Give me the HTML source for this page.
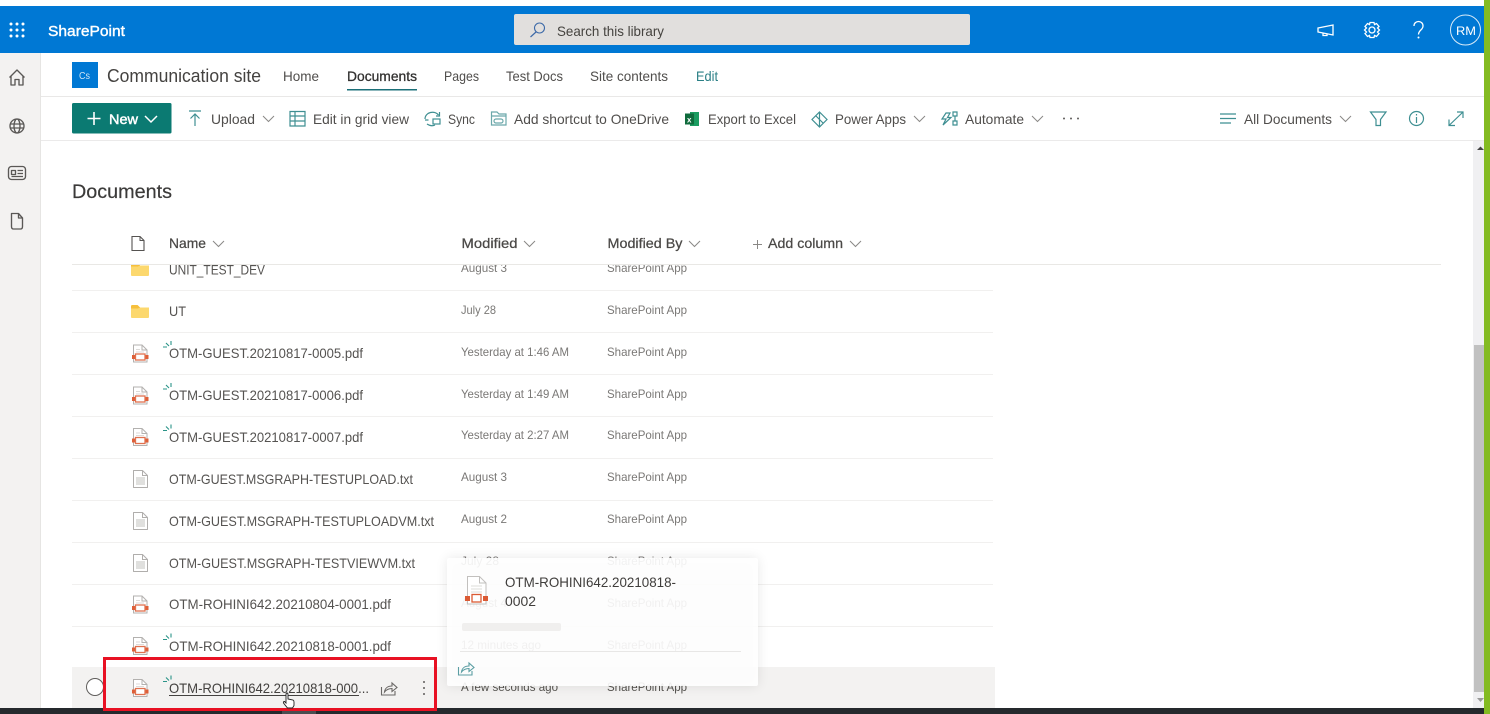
<!DOCTYPE html>
<html lang="en"><head><meta charset="utf-8"><title>Documents</title>
<style>
html,body{margin:0;padding:0;width:1490px;height:714px;overflow:hidden;background:#fff}
svg{display:block;filter:blur(.3px)}
text{font-family:"Liberation Sans",sans-serif;font-size:14px;fill:#4a4846}
.n{font-size:14px;fill:#555351}
.m{font-size:12px;fill:#7a7876}
.h{font-size:14px;fill:#4a4846;stroke:#4a4846;stroke-width:.25}
.c{font-size:14px;fill:#504e4c}
.ic{fill:none;stroke:#3f8f92;stroke-width:1.2}
.gr{fill:none;stroke:#5a5856;stroke-width:1.35;stroke-linejoin:round}
.w{fill:none;stroke:#fff;stroke-width:1.3}
.ch{fill:none;stroke:#8a8886;stroke-width:1}
</style></head><body>
<svg width="1490" height="714" viewBox="0 0 1490 714" xmlns="http://www.w3.org/2000/svg">
<defs>
<g id="pdf"><path d="M1.5 .5H10L15 5.500V17.500H1.500Z" fill="#fff" stroke="#b3b1af"/><path d="M10 .5V5.500H15" fill="none" stroke="#b3b1af"/><path d="M4 5H8M4 7.500H12" stroke="#dcdad8"/><rect x="0" y="10.500" width="3" height="4" fill="#de5f38"/><rect x="13.500" y="10.500" width="3" height="4" fill="#de5f38"/><rect x="3.500" y="9.500" width="9.500" height="6" fill="#fff" stroke="#e0714f" stroke-width="1.300"/></g>
<g id="txt"><path d="M.5 .5H9.500L14.500 5.500V17.500H.5Z" fill="#fff" stroke="#b0aeac" stroke-linejoin="round"/><path d="M9.500 .5V5.500H14.500" fill="none" stroke="#b0aeac"/><path d="M3 8H12M3 10H12M3 12H12M3 14H12" stroke="#c2c0be"/></g>
<g id="folder"><path d="M0 1.500Q0 0 1.500 0H6.500L9 2.500H18V12Q18 13 17 13H1Q0 13 0 12Z" fill="#fcd86e"/><path d="M0 3.500H6.500L9 2.500H0Z" fill="#f4ba36"/><path d="M0 1.500Q0 0 1.500 0H6.500L9 2.500L6.500 3.500H0Z" fill="#f6bf3c"/></g>
<g id="sy"><path d="M0 6H4M3 2L6 5M8 0V4" fill="none" stroke="#2a9488" stroke-width="1.100"/></g>
<g id="share"><path d="M.5 7V15H14V11" fill="none" stroke="currentColor" stroke-width="1.100"/><path d="M3.500 12C4 8 7 6 11 6V3L16 7.500L11 11.500V8.500C8 8.500 5.500 9.500 3.500 12Z" fill="none" stroke="currentColor" stroke-width="1.100"/></g>
</defs>

<rect width="1490" height="714" fill="#fff"/>
<!-- left rail -->
<rect x="0" y="53" width="41" height="661" fill="#f3f2f1"/>
<rect x="40" y="53" width="1" height="661" fill="#e6e5e3"/>
<path d="M9.500 77.500L17 70L24.500 77.500M11 76V85H15V79.500H19V85H23V76" class="gr"/>
<circle cx="17" cy="126" r="7" class="gr"/><ellipse cx="17" cy="126" rx="3" ry="7" class="gr"/><path d="M10.500 124H23.500M10.500 128H23.500" class="gr"/>
<rect x="8.500" y="166.500" width="17" height="13" rx="3" class="gr"/><rect x="11.500" y="170.500" width="4" height="4" class="gr"/><path d="M17.500 170.500H23M17.500 173.500H23M11.500 176.500H23" class="gr"/>
<path d="M11.500 213.500H18.500L22.500 218V226.500Q22.500 229 20.500 229H13.500Q11.500 229 11.500 226.500Z" class="gr"/><path d="M18.500 213.500V218H22.500" class="gr"/>

<!-- top bars -->
<rect y="0" width="1490" height="6" fill="#fff"/>
<rect y="6" width="1484" height="47" fill="#0078d4"/>
<g fill="#fff"><circle cx="11" cy="24" r="1.500"/><circle cx="17" cy="24" r="1.500"/><circle cx="23" cy="24" r="1.500"/><circle cx="11" cy="30" r="1.500"/><circle cx="17" cy="30" r="1.500"/><circle cx="23" cy="30" r="1.500"/><circle cx="11" cy="36" r="1.500"/><circle cx="17" cy="36" r="1.500"/><circle cx="23" cy="36" r="1.500"/></g>
<text x="48" y="36" textLength="77" lengthAdjust="spacingAndGlyphs" style="font-size:15px;fill:#fff;stroke:#fff;stroke-width:.4">SharePoint</text>
<rect x="514" y="14" width="456" height="31" rx="2" fill="#e1dfdd"/>
<circle cx="539.500" cy="28" r="5" fill="none" stroke="#3d6aa8" stroke-width="1.100"/><path d="M536 32L530.500 37" stroke="#3d6aa8" stroke-width="1.200"/>
<text x="557" y="36" textLength="107" lengthAdjust="spacingAndGlyphs" style="fill:#45433f">Search this library</text>
<path d="M1318 28L1333 25V35L1318 32ZM1323 33V35.500H1327V34" class="w"/>
<g transform="translate(1372,30)"><circle r="3" class="w"/><path d="M-2 -7.500H2L2.500 -5.500L4.500 -6.500L7 -3.500L5.500 -2L7.500 0L5.500 2L7 3.500L4.500 6.500L2.500 5.500L2 7.500H-2L-2.500 5.500L-4.500 6.500L-7 3.500L-5.500 2L-7.500 0L-5.500 -2L-7 -3.500L-4.500 -6.500L-2.500 -5.500Z" class="w"/></g>
<path d="M1414 26C1414 20 1423 20 1423 26C1423 30 1418.500 30 1418.500 34.500" class="w"/><circle cx="1418.500" cy="37.500" r="1" fill="#fff"/>
<circle cx="1465.500" cy="30" r="15" fill="none" stroke="#d9ebf8" stroke-width="1"/>
<text x="1456" y="35" textLength="20" lengthAdjust="spacingAndGlyphs" style="font-size:12px;fill:#fff">RM</text>
<rect x="1484" y="0" width="6" height="714" fill="#84bb22"/>

<!-- site header -->
<rect x="72" y="62" width="26" height="26" fill="#0078d4"/>
<text x="79" y="79" textLength="11" lengthAdjust="spacingAndGlyphs" style="font-size:10px;fill:#cfe4f5">Cs</text>
<text x="107" y="82" textLength="154" lengthAdjust="spacingAndGlyphs" style="font-size:18px;fill:#444240">Communication site</text>
<text x="283" y="81" textLength="36" lengthAdjust="spacingAndGlyphs" class="c">Home</text>
<text x="347" y="81" textLength="70" lengthAdjust="spacingAndGlyphs" class="c" style="fill:#323130;stroke:#323130;stroke-width:.3">Documents</text>
<rect x="347" y="89" width="70" height="1.500" fill="#1b6f78"/>
<text x="444" y="81" textLength="35" lengthAdjust="spacingAndGlyphs" class="c">Pages</text>
<text x="506" y="81" textLength="57" lengthAdjust="spacingAndGlyphs" class="c">Test Docs</text>
<text x="590" y="81" textLength="78" lengthAdjust="spacingAndGlyphs" class="c">Site contents</text>
<text x="696" y="81" textLength="22" lengthAdjust="spacingAndGlyphs" style="fill:#2a7f85">Edit</text>
<rect x="41" y="96" width="1443" height="1" fill="#e9e8e7"/>

<!-- command bar -->
<rect x="72" y="103" width="99.500" height="30.500" rx="1.500" fill="#0b7a72"/>
<path d="M94 112V125M87.500 118.500H100.500" stroke="#fff" stroke-width="1.600" fill="none"/>
<text x="109" y="124" textLength="29" lengthAdjust="spacingAndGlyphs" style="fill:#fff;stroke:#fff;stroke-width:.45">New</text>
<path d="M145 116L151 122L157 116" fill="none" stroke="#fff" stroke-width="1.500"/>
<path d="M189 111H201M195 126V114M190.500 118.500L195 114L199.500 118.500" class="ic"/>
<text x="211" y="124" textLength="44" lengthAdjust="spacingAndGlyphs" class="c">Upload</text>
<path d="M263 116L268.500 121.500L274 116" class="ch"/>
<path d="M290 111.500H305V126H290ZM290 116H305M290 121H305M295 111.500V126" class="ic"/>
<text x="313" y="124" textLength="96" lengthAdjust="spacingAndGlyphs" class="c">Edit in grid view</text>
<path d="M425 119C425 112 435 110 438.500 115M439.500 112V116H436M425 120H428.500M427 124C430 126 433 126 435 125" class="ic"/><rect x="433" y="119" width="7" height="5" class="ic"/>
<text x="448" y="124" textLength="27" lengthAdjust="spacingAndGlyphs" class="c">Sync</text>
<path d="M491.500 112H497L499 114H506V125H491.500ZM491.500 116H506" class="ic" style="stroke:#6ba8aa"/><rect x="494" y="119" width="9" height="4" rx="2" class="ic" style="stroke:#6ba8aa"/>
<text x="514" y="124" textLength="155" lengthAdjust="spacingAndGlyphs" class="c">Add shortcut to OneDrive</text>
<rect x="690" y="112" width="9" height="14" fill="#1a9c60"/><rect x="685" y="113.500" width="9" height="11" fill="#0f6b3c"/><text x="687" y="122.500" style="font-size:8px;font-weight:bold;fill:#fff">x</text>
<text x="708" y="124" textLength="88" lengthAdjust="spacingAndGlyphs" class="c">Export to Excel</text>
<path d="M819.500 112L827 119.500L819.500 127L812 119.500ZM819.500 112V127M816 116L823 123" class="ic"/>
<text x="835" y="124" textLength="71" lengthAdjust="spacingAndGlyphs" class="c">Power Apps</text>
<path d="M914 116L919.500 121.500L925 116" class="ch"/>
<path d="M946 113L942 119H946L943 125L951 117.500H947.500L950 113ZM953 112H957V116H953ZM953 121H957V125H953ZM955 116V121" class="ic"/>
<text x="965" y="124" textLength="59" lengthAdjust="spacingAndGlyphs" class="c">Automate</text>
<path d="M1032 116L1037.500 121.500L1043 116" class="ch"/>
<g fill="#5f5d5b"><circle cx="1064" cy="118.500" r="1"/><circle cx="1071" cy="118.500" r="1"/><circle cx="1078" cy="118.500" r="1"/></g>
<path d="M1220 114H1236M1220 118.500H1236M1220 123H1231" class="ic"/>
<text x="1244" y="124" textLength="88" lengthAdjust="spacingAndGlyphs" class="c">All Documents</text>
<path d="M1340 116L1345.500 121.500L1351 116" class="ch"/>
<path d="M1370.500 112H1386L1380.500 119.500V125.500H1376V119.500Z" class="ic"/>
<circle cx="1416.500" cy="118.500" r="7" class="ic"/><path d="M1416.500 117V123M1416.500 114V115.500" class="ic"/>
<path d="M1449 125.500L1463 112M1457 112H1463V118M1449 119.500V125.500H1455" class="ic"/>
<rect x="41" y="140" width="1443" height="1" fill="#ebeaea"/>

<!-- scrollbar -->
<rect x="1473" y="141" width="11" height="567" fill="#f0f0f2"/>
<path d="M1477 150L1480.500 146.500L1484 150Z" fill="#444"/>
<rect x="1474" y="345" width="10" height="347" fill="#c1c1c1"/>
<path d="M1477 698H1484L1480.500 702Z" fill="#9a9a9a"/>

<!-- rows -->
<g fill="#f1f0ef"><rect x="72" y="290" width="921" height="1"/><rect x="72" y="332" width="921" height="1"/><rect x="72" y="374" width="921" height="1"/><rect x="72" y="416" width="921" height="1"/><rect x="72" y="458" width="921" height="1"/><rect x="72" y="500" width="921" height="1"/><rect x="72" y="542" width="921" height="1"/><rect x="72" y="584" width="921" height="1"/><rect x="72" y="626" width="921" height="1"/></g>
<rect x="72" y="667" width="923" height="41" fill="#f3f2f1"/>

<text x="169" y="274.500" textLength="96" lengthAdjust="spacingAndGlyphs" class="n">UNIT_TEST_DEV</text>
<text x="461" y="272" textLength="46" lengthAdjust="spacingAndGlyphs" class="m">August 3</text>
<text x="607" y="272" textLength="80" lengthAdjust="spacingAndGlyphs" class="m">SharePoint App</text>
<use href="#folder" x="131" y="263"/>

<use href="#folder" x="131" y="305"/>
<text x="169" y="316" textLength="17" lengthAdjust="spacingAndGlyphs" class="n">UT</text>
<text x="461" y="314" textLength="35" lengthAdjust="spacingAndGlyphs" class="m">July 28</text>
<text x="607" y="314" textLength="80" lengthAdjust="spacingAndGlyphs" class="m">SharePoint App</text>

<use href="#pdf" x="132" y="344.500"/><use href="#sy" x="163" y="341"/>
<text x="169" y="358" textLength="194" lengthAdjust="spacingAndGlyphs" class="n">OTM-GUEST.20210817-0005.pdf</text>
<text x="461" y="356" textLength="108" lengthAdjust="spacingAndGlyphs" class="m">Yesterday at 1:46 AM</text>
<text x="607" y="356" textLength="80" lengthAdjust="spacingAndGlyphs" class="m">SharePoint App</text>

<use href="#pdf" x="132" y="386.500"/><use href="#sy" x="163" y="383"/>
<text x="169" y="400" textLength="194" lengthAdjust="spacingAndGlyphs" class="n">OTM-GUEST.20210817-0006.pdf</text>
<text x="461" y="398" textLength="108" lengthAdjust="spacingAndGlyphs" class="m">Yesterday at 1:49 AM</text>
<text x="607" y="398" textLength="80" lengthAdjust="spacingAndGlyphs" class="m">SharePoint App</text>

<use href="#pdf" x="132" y="428"/><use href="#sy" x="163" y="424.500"/>
<text x="169" y="442" textLength="194" lengthAdjust="spacingAndGlyphs" class="n">OTM-GUEST.20210817-0007.pdf</text>
<text x="461" y="439" textLength="108" lengthAdjust="spacingAndGlyphs" class="m">Yesterday at 2:27 AM</text>
<text x="607" y="439" textLength="80" lengthAdjust="spacingAndGlyphs" class="m">SharePoint App</text>

<use href="#txt" x="133" y="470"/>
<text x="169" y="484" textLength="244" lengthAdjust="spacingAndGlyphs" class="n">OTM-GUEST.MSGRAPH-TESTUPLOAD.txt</text>
<text x="461" y="481" textLength="46" lengthAdjust="spacingAndGlyphs" class="m">August 3</text>
<text x="607" y="481" textLength="80" lengthAdjust="spacingAndGlyphs" class="m">SharePoint App</text>

<use href="#txt" x="133" y="512"/>
<text x="169" y="526" textLength="265" lengthAdjust="spacingAndGlyphs" class="n">OTM-GUEST.MSGRAPH-TESTUPLOADVM.txt</text>
<text x="461" y="523" textLength="46" lengthAdjust="spacingAndGlyphs" class="m">August 2</text>
<text x="607" y="523" textLength="80" lengthAdjust="spacingAndGlyphs" class="m">SharePoint App</text>

<use href="#txt" x="133" y="554"/>
<text x="169" y="568" textLength="246" lengthAdjust="spacingAndGlyphs" class="n">OTM-GUEST.MSGRAPH-TESTVIEWVM.txt</text>
<text x="461" y="565" textLength="38" lengthAdjust="spacingAndGlyphs" class="m">July 28</text>
<text x="607" y="565" textLength="80" lengthAdjust="spacingAndGlyphs" class="m">SharePoint App</text>

<use href="#pdf" x="132" y="595.500"/>
<text x="169" y="609" textLength="222" lengthAdjust="spacingAndGlyphs" class="n">OTM-ROHINI642.20210804-0001.pdf</text>
<text x="461" y="607" textLength="46" lengthAdjust="spacingAndGlyphs" class="m">August 4</text>
<text x="607" y="607" textLength="80" lengthAdjust="spacingAndGlyphs" class="m">SharePoint App</text>

<use href="#pdf" x="132" y="637"/><use href="#sy" x="163" y="633.500"/>
<text x="169" y="651" textLength="222" lengthAdjust="spacingAndGlyphs" class="n">OTM-ROHINI642.20210818-0001.pdf</text>
<text x="461" y="649" textLength="80" lengthAdjust="spacingAndGlyphs" class="m">12 minutes ago</text>
<text x="607" y="649" textLength="80" lengthAdjust="spacingAndGlyphs" class="m">SharePoint App</text>

<circle cx="95" cy="687" r="8.500" fill="#fff" stroke="#605e5c" stroke-width="1"/>
<use href="#pdf" x="132" y="679"/><use href="#sy" x="163" y="675.500"/>
<text x="169" y="693" textLength="200" lengthAdjust="spacingAndGlyphs" class="n" style="fill:#43413f">OTM-ROHINI642.20210818-000...</text>
<rect x="169" y="695" width="190" height="1" fill="#43413f"/>
<use href="#share" x="381" y="680" style="color:#6a6866"/>
<g fill="#5f5d5b"><circle cx="424" cy="682" r="1"/><circle cx="424" cy="688" r="1"/><circle cx="424" cy="694" r="1"/></g>
<text x="461" y="691" textLength="97" lengthAdjust="spacingAndGlyphs" class="m" style="fill:#55534f">A few seconds ago</text>
<text x="607" y="691" textLength="80" lengthAdjust="spacingAndGlyphs" class="m" style="fill:#55534f">SharePoint App</text>

<!-- header row (covers scrolled rows) -->
<rect x="41" y="141" width="1432" height="123" fill="#fff"/>
<text x="72" y="198" textLength="100" lengthAdjust="spacingAndGlyphs" style="font-size:19px;fill:#3b3a39;stroke:#3b3a39;stroke-width:.2">Documents</text>
<path d="M132 236.500H140L144 240.500V250.500H132Z" fill="none" stroke="#555351" stroke-width="1.100"/><path d="M140 236.500V240.500H144" fill="none" stroke="#555351" stroke-width="1"/>
<text x="169" y="248" textLength="37" lengthAdjust="spacingAndGlyphs" class="h">Name</text>
<path d="M213 241L218.500 246.500L224 241" class="ch"/>
<text x="461.500" y="248" textLength="56" lengthAdjust="spacingAndGlyphs" class="h">Modified</text>
<path d="M524 241L529.500 246.500L535 241" class="ch"/>
<text x="607.500" y="248" textLength="75" lengthAdjust="spacingAndGlyphs" class="h">Modified By</text>
<path d="M689 241L694.500 246.500L700 241" class="ch"/>
<path d="M757.500 240V249M753 244.500H762" class="ch"/>
<text x="768" y="248" textLength="75" lengthAdjust="spacingAndGlyphs" class="h">Add column</text>
<path d="M850 241L855.500 246.500L861 241" class="ch"/>
<rect x="72" y="264" width="1369" height="1" fill="#e9e8e5"/>

<!-- hover card -->
<rect x="447" y="558" width="311" height="128" fill="#000" opacity=".09" style="filter:blur(6px)"/>
<rect x="447" y="558" width="311" height="128" rx="2" fill="#fff" fill-opacity=".9"/>
<g transform="translate(465,576)"><path d="M2.500 .5H14.500L21 7V28H2.500Z" fill="#fff" stroke="#c2c0be"/><path d="M14.500 .5V7H21" fill="none" stroke="#c2c0be"/><path d="M6 10H17M6 13H17M6 16H17" stroke="#dedcda"/><rect x="0" y="20" width="5" height="5" fill="#db5a34"/><rect x="18" y="20" width="5" height="5" fill="#db5a34"/><rect x="7" y="18.500" width="9" height="7.500" fill="#fff" stroke="#db5a34" stroke-width="1.300"/></g>
<text x="505" y="587" textLength="171" lengthAdjust="spacingAndGlyphs" style="fill:#3f3d3b">OTM-ROHINI642.20210818-</text>
<text x="505" y="606" textLength="31" lengthAdjust="spacingAndGlyphs" style="fill:#3f3d3b">0002</text>
<rect x="462" y="623" width="99" height="8" rx="2" fill="#f0efee"/>
<rect x="460" y="651" width="281" height="1" fill="#e8e7e6"/>
<g transform="translate(458,660)" style="color:#5b9ea3"><use href="#share"/></g>

<!-- bottom taskbar -->
<rect x="0" y="708" width="1484" height="6" fill="#25292d"/>
<rect x="282" y="708" width="34" height="6" fill="#4a4d50"/>

<!-- red highlight -->
<rect x="104.500" y="658.500" width="331" height="51" fill="none" stroke="#e81123" stroke-width="3"/>

<!-- cursor -->
<path d="M286 694.500Q286 693 287 693Q288 693 288 694.500V699L293 700Q294 700.500 294 702V705.500L292.500 708H287.500L283.500 703Q283 701.500 284.500 701.500L286 703Z" fill="#fff" stroke="#222" stroke-width=".9"/>
</svg>
</body></html>
